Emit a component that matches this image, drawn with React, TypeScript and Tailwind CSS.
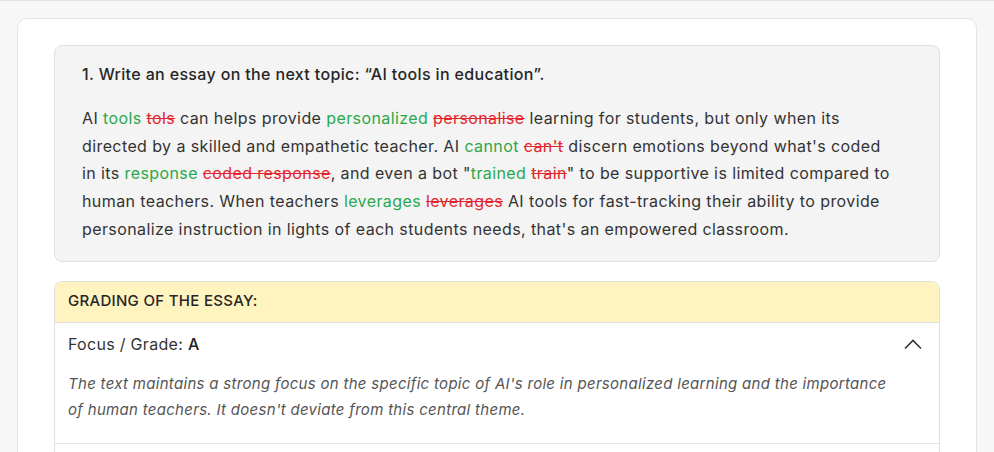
import { ReactNode } from 'react';

const font = { fontFamily: 'Inter, "Open Sans", sans-serif' };

function Ok({ children }: { children: ReactNode }) {
  return <span className="text-[#2aa84a]">{children}</span>;
}

function Bad({ children }: { children: ReactNode }) {
  return <span className="text-[#e3262b] line-through">{children}</span>;
}

function ChevronUp() {
  return (
    <svg width="20" height="12" viewBox="0 0 20 12" fill="none" className="text-[#333]">
      <path d="M2 10.5L10 2.5L18 10.5" stroke="currentColor" strokeWidth="1.6" />
    </svg>
  );
}

export default function App() {
  return (
    <div className="min-h-screen bg-[#f7f7f7] border-t border-[#e3e3e3] pt-[17px] px-[17px]" style={font}>
      <div className="bg-white border border-[#e4e4e4] rounded-[10px] pt-[26px] px-[36px] pb-8">
        <div className="bg-[#f4f4f4] border border-[#e0e0e0] rounded-[8px] pt-[17px] pb-[17px] pl-[27px] pr-6">
          <h2 className="text-[16px] font-medium tracking-[0.35px] text-[#262626] leading-[22px]">
            1. Write an essay on the next topic: “AI tools in education”.
          </h2>
          <p className="mt-[20px] text-[16px] tracking-[0.4px] leading-[27.7px] text-[#333] whitespace-nowrap">
            AI <Ok>tools</Ok> <Bad>tols</Bad> can helps provide <Ok>personalized</Ok> <Bad>personalise</Bad> learning
            for students, but only when its
            <br />
            directed by a skilled and empathetic teacher. AI <Ok>cannot</Ok> <Bad>can't</Bad> discern emotions beyond
            what's coded
            <br />
            in its <Ok>response</Ok> <Bad>coded response</Bad>, and even a bot "<Ok>trained</Ok> <Bad>train</Bad>" to
            be supportive is limited compared to
            <br />
            human teachers. When teachers <Ok>leverages</Ok> <Bad>leverages</Bad> AI tools for fast-tracking their
            ability to provide
            <br />
            personalize instruction in lights of each students needs, that's an empowered classroom.
          </p>
        </div>

        <div className="mt-[19px] border border-[#e0e0e0] rounded-[8px] overflow-hidden">
          <div className="bg-[#fff3bf] px-[13px] h-[41px] flex items-center border-b border-[#e0e0e0]">
            <span className="text-[15px] font-medium tracking-[0.3px] uppercase text-[#262626]">Grading of the essay:</span>
          </div>
          <div className="px-[13px] border-b border-[#e6e6e6]">
            <div className="flex items-center justify-between h-[43px]">
              <span className="text-[16px] tracking-[0.3px] text-[#333]">
                Focus / Grade: <span className="font-medium text-[#222]">A</span>
              </span>
              <span className="mr-[3px]">
                <ChevronUp />
              </span>
            </div>
            <p className="pt-[5px] pb-[20px] text-[15px] italic tracking-[0.3px] leading-[26px] text-[#555] whitespace-nowrap">
              The text maintains a strong focus on the specific topic of AI's role in personalized learning and the
              importance
              <br />
              of human teachers. It doesn't deviate from this central theme.
            </p>
          </div>
          <div className="h-12 bg-white" />
        </div>
      </div>
    </div>
  );
}
